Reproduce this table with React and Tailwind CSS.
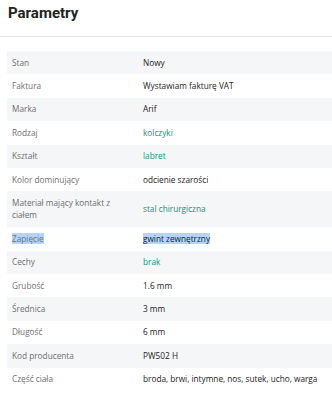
const params = [
  { label: "Stan", value: "Nowy" },
  { label: "Faktura", value: "Wystawiam fakturę VAT" },
  { label: "Marka", value: "Arif" },
  { label: "Rodzaj", value: "kolczyki", link: true },
  { label: "Kształt", value: "labret", link: true },
  { label: "Kolor dominujący", value: "odcienie szarości" },
  { label: "Materiał mający kontakt z ciałem", value: "stal chirurgiczna", link: true },
  { label: "Zapięcie", value: "gwint zewnętrzny", selected: true },
  { label: "Cechy", value: "brak", link: true },
  { label: "Grubość", value: "1.6 mm" },
  { label: "Średnica", value: "3 mm" },
  { label: "Długość", value: "6 mm" },
  { label: "Kod producenta", value: "PW502 H" },
  { label: "Część ciała", value: "broda, brwi, intymne, nos, sutek, ucho, warga" },
];

export default function App() {
  return (
    <div className="min-h-[400px] bg-white font-['Open_Sans',sans-serif]">
      <div className="border-b border-[#e6e6e6] px-2 pb-[13px] pt-[3px]">
        <h2 className="font-['Roboto',sans-serif] text-[15px] font-bold leading-[20px] text-[#222]">
          Parametry
        </h2>
      </div>

      <div className="pl-[7px] pt-[14px]">
        {params.map((p, i) => (
          <div
            key={p.label}
            className={`grid grid-cols-[136px_1fr] items-center py-[5.5px] text-[8.25px] leading-[12.4px] ${
              i % 2 === 0 ? "bg-[#f5f6f7]" : "bg-white"
            }`}
          >
            <div className="pl-[5px] pr-[16px] text-[#6f6f6f]">
              <span className={p.selected ? "bg-[#b4d5fb]" : ""}>{p.label}</span>
            </div>
            <div className={p.link ? "text-[#16917a]" : "text-[#222]"}>
              <span className={p.selected ? "bg-[#b4d5fb]" : ""}>{p.value}</span>
            </div>
          </div>
        ))}
      </div>
    </div>
  );
}
